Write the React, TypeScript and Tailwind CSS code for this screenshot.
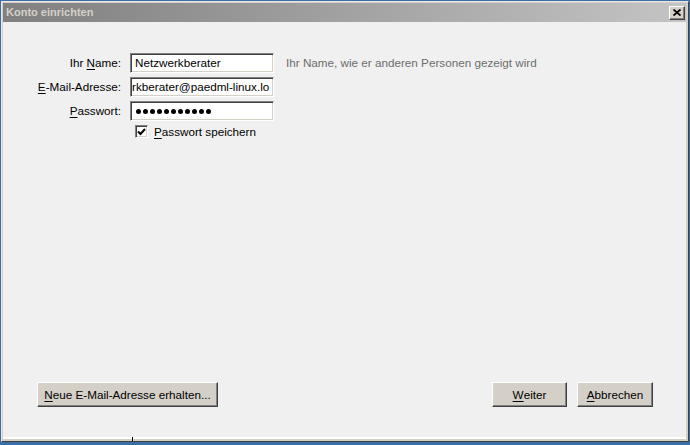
import React from "react";

const font = { fontFamily: '"Liberation Sans", Arial, sans-serif' };

const U = ({ children }: { children: React.ReactNode }) => <span className="underline underline-offset-2">{children}</span>;

const Field = ({ children }: { children: React.ReactNode }) => (
  <div className="flex h-[20px] w-[144px] items-center overflow-hidden border border-t-[#808080] border-l-[#808080] border-r-white border-b-white bg-white shadow-[inset_1px_1px_0_#404040,inset_-1px_-1px_0_#d4d0c8]">
    {children}
  </div>
);

const Button = ({ children, className }: { children: React.ReactNode; className: string }) => (
  <button
    className={`flex h-[25px] items-center justify-center border border-t-white border-l-white border-r-[#404040] border-b-[#404040] bg-[#d4d0c8] text-[11.7px] text-black shadow-[inset_-1px_-1px_0_#808080] ${className}`}
  >
    {children}
  </button>
);

export default function App() {
  return (
    <div className="relative h-[445px] w-[690px] bg-[#3a6ea5] pb-[3px] pl-px pr-px pt-px" style={font}>
      <div className="flex h-full flex-col border border-t-[#e8e8e8] border-l-[#e8e8e8] border-r-[#404040] border-b-[#404040] bg-[#d4d0c8] pb-[2px] pl-px pr-[2px] pt-px">
        <div className="flex h-[19px] items-center justify-between bg-gradient-to-r from-[#808080] to-[#c4c4c4] pl-[3px] pr-px">
          <span className="text-[11px] font-bold text-[#d4d0c8]">Konto einrichten</span>
          <div className="flex h-[14px] w-[16px] items-center justify-center border border-t-white border-l-white border-r-[#404040] border-b-[#404040] bg-[#d4d0c8] shadow-[inset_-1px_-1px_0_#808080]">
            <svg width="8" height="7" viewBox="0 0 8 7">
              <path d="M0.5 0.5 L7.5 6.5 M7.5 0.5 L0.5 6.5" stroke="#000" strokeWidth="1.8" />
            </svg>
          </div>
        </div>
        <div className="flex flex-1 flex-col justify-between border-b-2 border-white bg-[#f0f0f0] pt-[31px] pb-[30px] text-[11.7px] text-black">
          <div className="grid grid-cols-[118px_auto_1fr] items-center gap-x-[9px] gap-y-[4px]">
            <span className="text-right">Ihr <U>N</U>ame:</span>
            <Field>
              <span className="pl-[4px]">Netzwerkberater</span>
            </Field>
            <span className="pl-[3px] text-[#6d6d6d]">Ihr Name, wie er anderen Personen gezeigt wird</span>

            <span className="text-right"><U>E</U>-Mail-Adresse:</span>
            <Field>
              <span className="whitespace-nowrap pl-px">rkberater@paedml-linux.lo</span>
            </Field>
            <span />

            <span className="text-right"><U>P</U>asswort:</span>
            <Field>
              <div className="flex gap-[2px] pl-[5px]">
                {Array.from({ length: 11 }).map((_, i) => (
                  <span key={i} className="h-[5px] w-[5px] rounded-full bg-black" />
                ))}
              </div>
            </Field>
            <span />

            <span />
            <label className="-mt-[2px] flex items-center gap-[6px] pl-[5px]">
              <span className="flex h-[13px] w-[13px] items-center justify-center border border-t-[#808080] border-l-[#808080] border-r-white border-b-white bg-white shadow-[inset_1px_1px_0_#404040,inset_-1px_-1px_0_#d4d0c8]">
                <svg width="9" height="8" viewBox="0 0 9 8">
                  <path d="M1 3.5 L3.5 6 L8 1" fill="none" stroke="#000" strokeWidth="2" />
                </svg>
              </span>
              <span className="whitespace-nowrap"><U>P</U>asswort speichern</span>
            </label>
            <span />
          </div>

          <div className="flex items-center justify-between pl-[34px] pr-[33px]">
            <Button className="w-[181px]"><U>N</U>eue E-Mail-Adresse erhalten...</Button>
            <div className="flex gap-[10px]">
              <Button className="w-[75px]"><U>W</U>eiter</Button>
              <Button className="w-[76px]"><U>A</U>bbrechen</Button>
            </div>
          </div>
        </div>
      </div>
      <span className="absolute left-[132px] top-[437px] h-[4px] w-px bg-black" />
    </div>
  );
}
